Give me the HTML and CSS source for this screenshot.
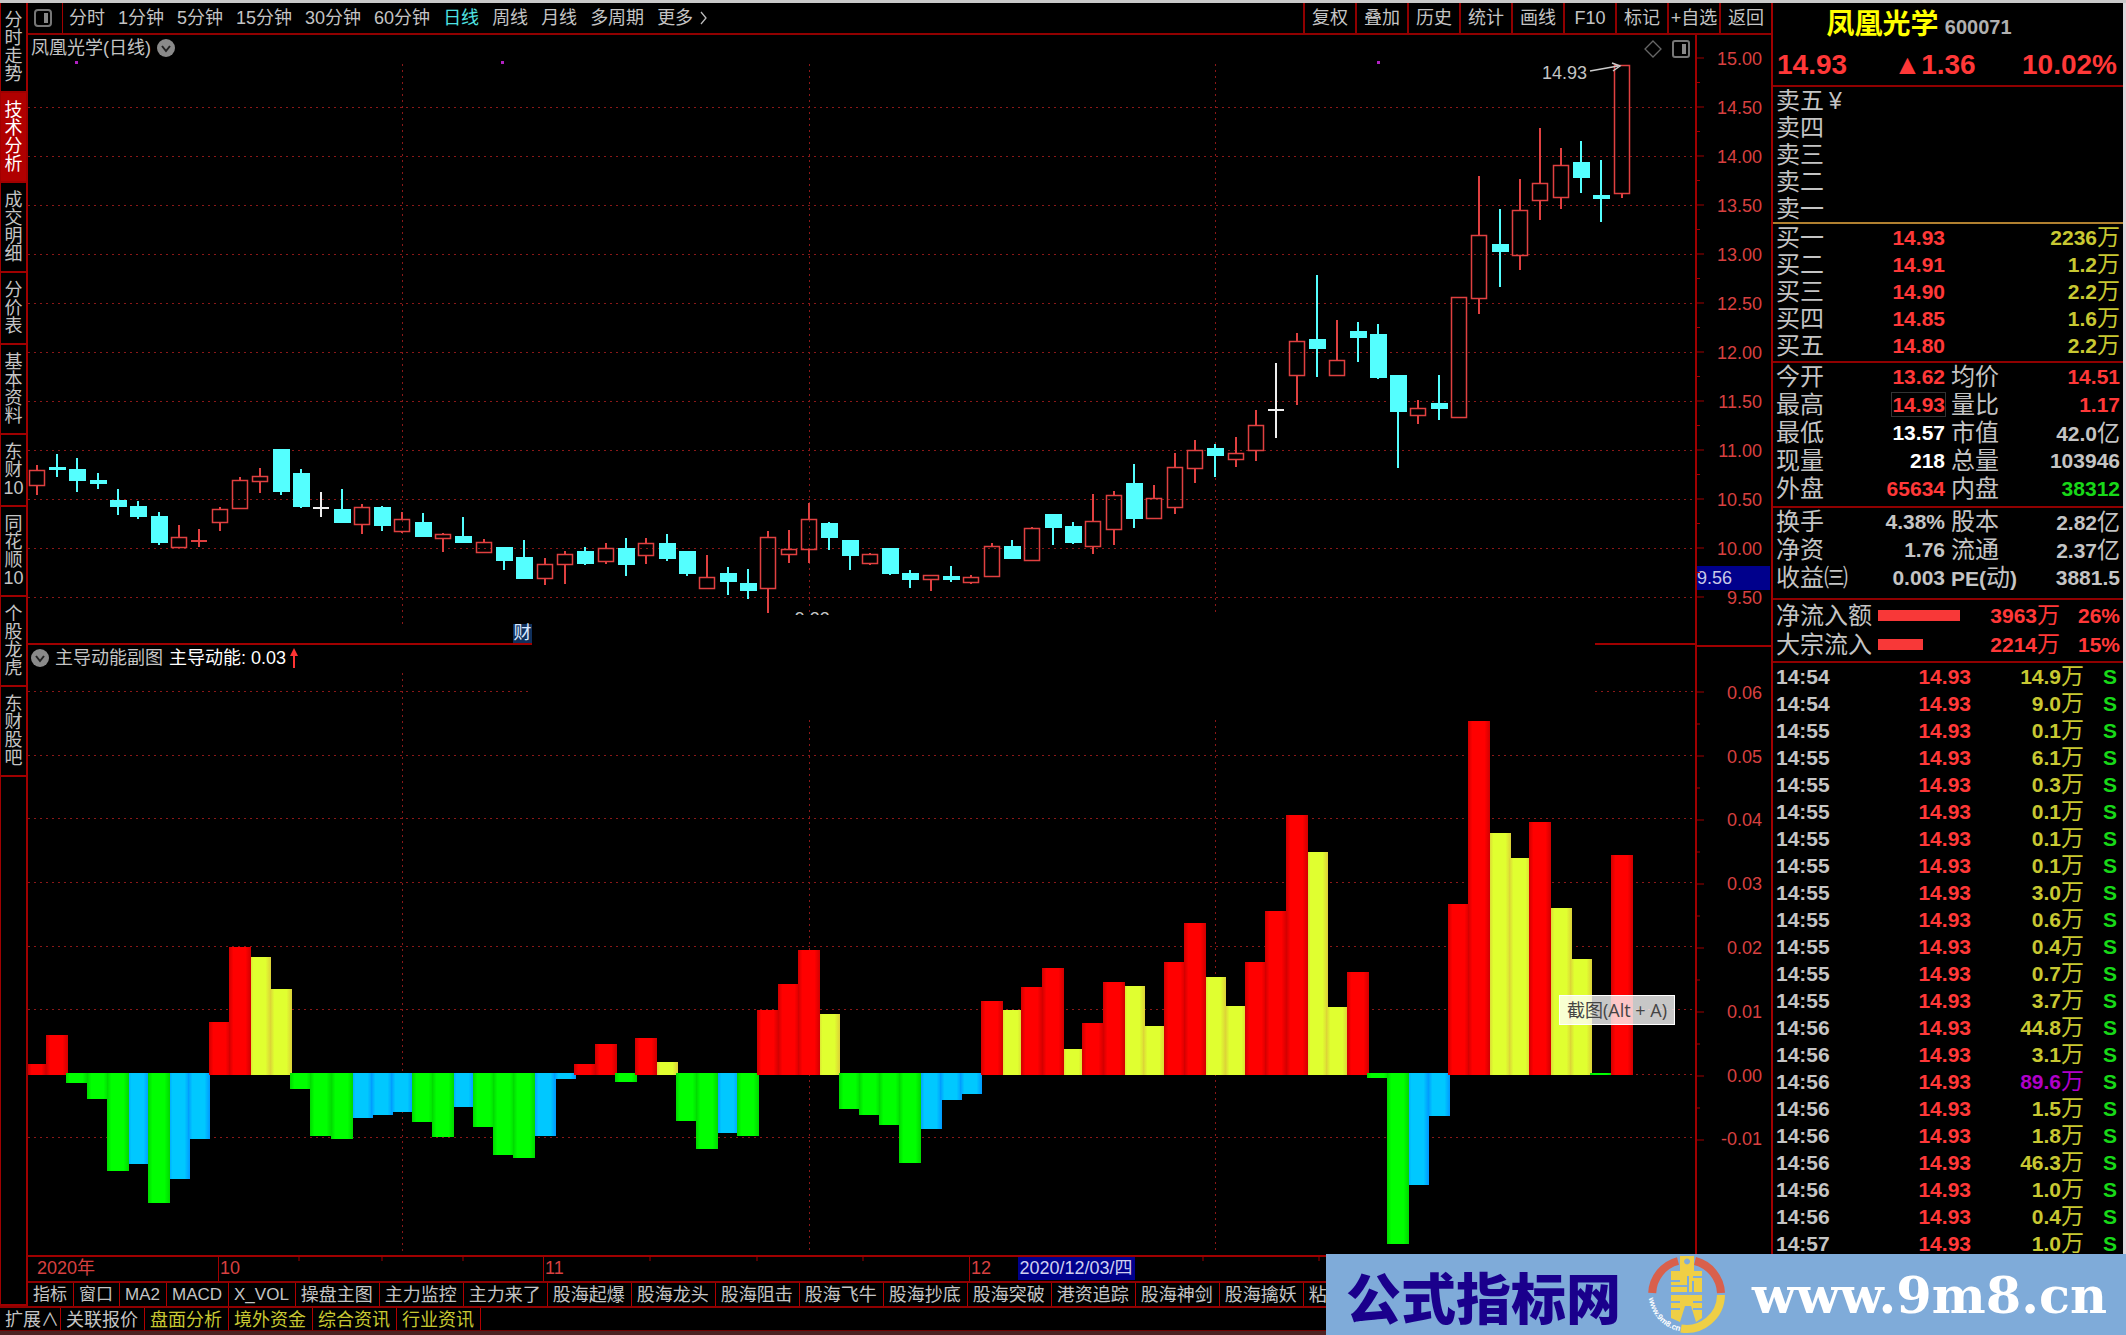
FILE: index.html
```html
<!DOCTYPE html>
<html lang="zh-CN">
<head>
<meta charset="utf-8">
<title>凤凰光学 600071</title>
<link rel="stylesheet" href="styles.css">
</head>
<body>
<div class="edge-strip"></div>
<div class="app">
  <div class="left">
    <div class="workspace">
      <nav class="side-tabs">
        <button class="four">分时走势</button>
        <button class="four active">技术分析</button>
        <button class="four">成交明细</button>
        <button class="three">分价表</button>
        <button class="four">基本资料</button>
        <button class="three">东财<span>10</span></button>
        <button class="four">同花顺<span>10</span></button>
        <button class="four">个股龙虎</button>
        <button class="four">东财股吧</button>
      </nav>
      <main class="main">
        <header class="toolbar">
          <button class="layout-btn" aria-label="布局"><svg width="18" height="18" viewBox="0 0 18 18"><rect x="1" y="1" width="16" height="16" rx="3" fill="none" stroke="#777" stroke-width="2"/><rect x="10" y="4" width="4" height="10" fill="#888"/></svg></button>
          <div class="periods">
            <button>分时</button><button>1分钟</button><button>5分钟</button><button>15分钟</button><button>30分钟</button><button>60分钟</button><button class="on">日线</button><button>周线</button><button>月线</button><button>多周期</button><button>更多<svg width="9" height="14" viewBox="0 0 9 14"><path d="M2 1l5 6-5 6" fill="none" stroke="#bbb" stroke-width="1.3"/></svg></button>
          </div>
          <div class="actions">
            <button>复权</button><button>叠加</button><button>历史</button><button>统计</button><button>画线</button><button>F10</button><button>标记</button><button>+自选</button><button>返回</button>
          </div>
        </header>

        <section class="pane price-pane">
          <div class="plot">
            <svg class="chart" id="price" viewBox="28 35 1667 610" preserveAspectRatio="none"></svg>
            <div class="pane-title">凤凰光学(日线) <svg width="18" height="18" viewBox="0 0 18 18"><circle cx="9" cy="9" r="9" fill="#8a8a8a"/><path d="M5 7l4 5 4-5" fill="none" stroke="#222" stroke-width="2"/></svg></div>
            <div class="pane-icons">
              <svg width="18" height="18" viewBox="0 0 18 18"><path d="M9 1l8 8-8 8-8-8z" fill="none" stroke="#666" stroke-width="1.3"/></svg>
              <svg width="18" height="18" viewBox="0 0 18 18"><rect x="1" y="1" width="16" height="16" rx="2" fill="none" stroke="#777" stroke-width="2"/><rect x="10" y="4" width="4" height="10" fill="#888"/></svg>
            </div>
            <span class="high-mark">14.93</span>
            <span class="low-mark">9.33</span>
            <span class="event-mark">财</span>
          </div>
          <div class="axis price-axis">
            <span>15.00</span><span>14.50</span><span>14.00</span><span>13.50</span><span>13.00</span><span>12.50</span><span>12.00</span><span>11.50</span><span>11.00</span><span>10.50</span><span>10.00</span><span>9.50</span>
            <b class="cursor-price">9.56</b>
          </div>
        </section>

        <section class="pane sub-pane">
          <div class="plot">
            <svg class="chart" id="energy" viewBox="28 645 1667 610" preserveAspectRatio="none"></svg>
            <div class="pane-title"><svg width="18" height="18" viewBox="0 0 18 18"><circle cx="9" cy="9" r="9" fill="#8a8a8a"/><path d="M5 7l4 5 4-5" fill="none" stroke="#222" stroke-width="2"/></svg><span>主导动能副图</span><span class="value">主导动能: 0.03<svg width="8" height="20" viewBox="0 0 8 20"><path d="M4 0l4 8H5v12H3V8H0z" fill="#f33"/></svg></span></div>
            <div class="tip">截图(Alt + A)</div>
          </div>
          <div class="axis sub-axis">
            <span>0.06</span><span>0.05</span><span>0.04</span><span>0.03</span><span>0.02</span><span>0.01</span><span>0.00</span><span>-0.01</span>
          </div>
        </section>

        <div class="dates">
          <span class="d-year">2020年</span><span>10</span><span>11</span><span>12</span>
          <b class="cursor-date">2020/12/03/四</b>
        </div>

        <div class="tabs indicators">
          <button class="narrow">指标</button><button class="narrow">窗口</button><button class="narrow">MA2</button><button class="narrow">MACD</button><button class="narrow">X_VOL</button><button>操盘主图</button><button>主力监控</button><button>主力来了</button><button>股海起爆</button><button>股海龙头</button><button>股海阻击</button><button>股海飞牛</button><button>股海抄底</button><button>股海突破</button><button>港资追踪</button><button>股海神剑</button><button>股海擒妖</button><button>粘</button>
        </div>
      </main>
    </div>
    <div class="tabs links">
      <button class="expand">扩展∧</button><button>关联报价</button><button class="gold">盘面分析</button><button class="gold">境外资金</button><button class="gold">综合资讯</button><button class="gold">行业资讯</button>
    </div>
  </div>

  <aside class="quote">
    <header class="quote-head">
      <h1>凤凰光学 <small>600071</small></h1>
      <div class="last"><span>14.93</span><span>▲1.36</span><span>10.02%</span></div>
    </header>
    <table class="book asks">
      <tr><th>卖五<i>¥</i></th><td></td><td></td></tr>
      <tr><th>卖四</th><td></td><td></td></tr>
      <tr><th>卖三</th><td></td><td></td></tr>
      <tr><th>卖二</th><td></td><td></td></tr>
      <tr><th>卖一</th><td></td><td></td></tr>
    </table>
    <table class="book bids">
      <tr><th>买一</th><td class="up">14.93</td><td class="vol">2236<i>万</i></td></tr>
      <tr><th>买二</th><td class="up">14.91</td><td class="vol">1.2<i>万</i></td></tr>
      <tr><th>买三</th><td class="up">14.90</td><td class="vol">2.2<i>万</i></td></tr>
      <tr><th>买四</th><td class="up">14.85</td><td class="vol">1.6<i>万</i></td></tr>
      <tr><th>买五</th><td class="up">14.80</td><td class="vol">2.2<i>万</i></td></tr>
    </table>
    <table class="stats">
      <tr><th>今开</th><td class="up">13.62</td><th>均价</th><td class="up">14.51</td></tr>
      <tr><th>最高</th><td class="up"><span class="boxed">14.93</span></td><th>量比</th><td class="up">1.17</td></tr>
      <tr><th>最低</th><td class="white">13.57</td><th>市值</th><td>42.0<i>亿</i></td></tr>
      <tr><th>现量</th><td class="white">218</td><th>总量</th><td>103946</td></tr>
      <tr><th>外盘</th><td class="up">65634</td><th>内盘</th><td class="down">38312</td></tr>
    </table>
    <table class="stats extra">
      <tr><th>换手</th><td>4.38%</td><th>股本</th><td>2.82<i>亿</i></td></tr>
      <tr><th>净资</th><td>1.76</td><th>流通</th><td>2.37<i>亿</i></td></tr>
      <tr><th>收益㈢</th><td>0.003</td><th class="pe"><b>PE(</b>动<b>)</b></th><td>3881.5</td></tr>
    </table>
    <table class="flow">
      <tr><th>净流入额</th><td class="meter"><div style="width:82px"></div></td><td class="up">3963<i>万</i></td><td class="up">26%</td></tr>
      <tr><th>大宗流入</th><td class="meter"><div style="width:45px"></div></td><td class="up">2214<i>万</i></td><td class="up">15%</td></tr>
    </table>
    <div class="ticks-box"><table class="ticks" id="ticks"></table></div>
  </aside>
</div>

<a class="banner" href="#">
  <strong>公式指标网</strong>
  <svg width="90" height="81" viewBox="0 0 90 81">
    <path d="M12.200 39A34.500 34.500 0 0 1 38 7" fill="none" stroke="#d9604c" stroke-width="8"/>
    <path d="M55 7A34.500 34.500 0 0 1 81 39" fill="none" stroke="#d9604c" stroke-width="8"/>
    <path d="M81 41A34.500 34.500 0 0 1 41 74.500" fill="none" stroke="#efcf45" stroke-width="8"/>
    <path fill-rule="evenodd" fill="#efcf45" d="M40 2H54V17H40zM47 4.500a3 3 0 1 0 .1 0z"/>
    <path fill="#efcf45" d="M31 17H62V38H31zM31 41H62V64L56 68 51 52H45L40 68 31 64z"/>
    <path d="M31 27H40M31 32H48M48 22V38M53 27V38M53 23H62M31 48H40M53 48H62M31 55H40M53 55H62" stroke="#7fabd9" stroke-width="2"/>
    <path id="arc" d="M9 44A38 38 0 0 0 39 77" fill="none"/>
    <text class="arc-text"><textPath href="#arc">www.9m8.cn</textPath></text>
  </svg>
  <em>www.9m8.cn</em>
</a>
<script src="chart.js"></script>
</body>
</html>
```
FILE: styles.css
```css
* { box-sizing: border-box; }
html, body { margin: 0; height: 100%; }
body {
  display: flex;
  flex-direction: column;
  min-height: 100vh;
  overflow: hidden;
  background: #000;
  color: #c4c4c4;
  font: 18px/24px "Liberation Sans", "Noto Sans CJK SC", sans-serif;
}
button {
  margin: 0;
  padding: 0;
  border: 0;
  background: none;
  color: inherit;
  font: inherit;
  white-space: nowrap;
}
i { font-style: normal; }
svg { display: block; }

.edge-strip { flex: none; height: 3px; background: #c9c9c9; }
.app { flex: 1; display: flex; min-height: 0; border-right: 3px solid #dcd8dc; border-bottom: 4px solid #4c2222; }
.left { flex: 1; min-width: 0; display: flex; flex-direction: column; }
.workspace { flex: 1; min-height: 0; display: flex; }

/* vertical tabs */
.side-tabs { flex: none; width: 28px; display: flex; flex-direction: column; border: solid #a00000; border-width: 0 2px 2px 1px; }
.side-tabs button {
  height: 90px;
  padding: 0 3px;
  border-bottom: 2px solid #a00000;
  font-size: 18px;
  line-height: 18px;
  white-space: normal;
}
.side-tabs button.three { height: 72px; }
.side-tabs button span { display: block; margin: 0 -1px; }
.side-tabs .active { background: #b00000; color: #fff; }

.main { flex: 1; min-width: 0; display: flex; flex-direction: column; }

/* toolbar */
.toolbar { flex: none; height: 32px; display: flex; border-bottom: 2px solid #900000; }
.layout-btn { width: 35px; padding-left: 6px; border-right: 1px solid #a00000; }
.periods { display: flex; gap: 13px; padding-left: 6px; }
.periods button { display: flex; align-items: center; gap: 6px; }
.periods .on { color: #4fe3e3; }
.actions { margin-left: auto; display: flex; }
.actions button { width: 52px; border-left: 2px solid #900000; }

/* chart panes */
.pane { flex: 1; min-height: 0; display: flex; }
.plot { position: relative; flex: 1; min-width: 0; }
.chart { position: absolute; inset: 0; width: 100%; height: 100%; }
.pane-title { position: relative; display: flex; align-items: center; gap: 6px; padding-left: 3px; height: 26px; }
.pane-title .value { color: #fff; display: flex; gap: 4px; align-items: center; }
.pane-icons { position: absolute; top: 5px; right: 5px; display: flex; gap: 10px; }
.axis { position: relative; flex: none; width: 76px; display: flex; flex-direction: column; border-left: 2px solid #a00000; color: #d84040; text-align: right; }
.axis span { display: flex; align-items: center; justify-content: flex-end; padding-right: 9px; }
.price-axis span { flex: 49 49 0; min-height: 0; }
.price-axis::after { content: ""; flex: 23 23 0; }
.sub-axis span { flex: 64 64 0; min-height: 0; }
.sub-axis::before { content: ""; flex: 14 14 0; }
.sub-axis::after { content: ""; flex: 84 84 0; }
.sub-axis { border-top: 2px solid #a00000; }
.cursor-price { position: absolute; left: 0; right: 1px; top: 87%; height: 24px; background: #00008c; color: #c8c8e8; font-weight: 400; text-align: left; }
.high-mark { position: absolute; right: 108px; top: 26px; }
.low-mark { position: absolute; left: 46%; top: 577px; height: 3px; overflow: hidden; line-height: 14px; }
.event-mark { position: absolute; left: 29%; bottom: 2px; width: 19px; margin-left: 2px; line-height: 19px; background: #10305c; color: #d8e8ff; }
.tip { position: absolute; right: 20px; top: 57%; margin-top: 2px; padding: 2px 7px; border: 1px solid #fff; background: rgba(255, 255, 255, .78); color: #444; font: 18px/24px "Open Sans", "Noto Sans CJK SC", sans-serif; }

/* date scale */
.dates { position: relative; flex: none; height: 26px; display: grid; grid-template-columns: 191fr 325fr 426fr 801fr; border-top: 2px solid #a00000; color: #d84040; line-height: 23px; }
.dates span { padding-left: 1px; border-right: 1px solid #a00000; }
.dates .d-year { padding-left: 9px; }
.cursor-date { position: absolute; left: 57%; margin-left: -4px; padding: 0 2px; background: #00008c; color: #d0d0f0; font-weight: 400; }

/* bottom tabs */
.tabs { flex: none; display: flex; overflow: hidden; height: 25px; border-top: 2px solid #900000; }
.tabs button { flex: none; padding: 0 6px 0 5px; border-right: 1px solid #b00000; }
.tabs .narrow { font-size: 17px; }
.tabs .expand { width: 61px; }
.links { border-bottom: 1px solid #700000; }
.links .gold { color: #c8c832; }

/* quote panel */
.quote { flex: none; width: 352px; display: flex; flex-direction: column; border-left: 2px solid #a00000; }
.quote-head { flex: none; height: 84px; border-bottom: 2px solid #900000; }
.quote h1 { margin: 0; padding: 0 58px 0 0; height: 41px; text-align: center; color: #ff0; font: bold 28px/38px "Noto Sans CJK SC", sans-serif; }
.quote h1 small { color: #b0b0b0; font: bold 20px "Liberation Sans", sans-serif; }
.last { display: flex; justify-content: space-between; padding: 0 6px 0 4px; color: #ff3838; font: bold 28px/42px "Liberation Sans", "DejaVu Sans", sans-serif; }
table { flex: none; width: 100%; border-collapse: collapse; table-layout: fixed; }
th { padding: 0; text-align: left; font-weight: 400; font-size: 24px; white-space: nowrap; }
td { padding: 0; text-align: right; font-weight: 700; font-size: 21px; white-space: nowrap; }
td i, th i { font-weight: 400; font-size: 23px; }
th i { margin-left: 5px; }
.up { color: #ff3838; }
.down { color: #18d818; }
.white { color: #fff; }
.vol { color: #c8c832; }
.big { color: #b000c8; }

.book, .stats, .flow { display: block; border-bottom: 2px solid #900000; }
.book tbody, .stats tbody, .flow tbody { display: block; }
.book tr { display: grid; grid-template-columns: 80px 89px 1fr; height: 27px; line-height: 27px; }
.book { padding: 0 3px; }
.asks { border-bottom-color: #b08030; }
.bids { padding-bottom: 2px; }
.stats tr { display: grid; grid-template-columns: 80px 89px 80px 1fr; height: 28px; line-height: 28px; }
.stats { padding: 0 3px 3px; }
.stats.extra { padding-bottom: 6px; }
.stats th:nth-child(3) { padding-left: 6px; }
.pe b { font-size: 21px; }
.boxed { outline: 1px solid #333; }
.flow tr { display: grid; grid-template-columns: 102px 90px 92px 1fr; height: 29px; line-height: 29px; }
.flow { padding: 1px 3px 2px; }
.meter { display: flex; align-items: center; }
.meter div { height: 11px; background: #f83838; }
.ticks-box { flex: 1; min-height: 0; overflow: hidden; padding: 0 3px; }
.ticks td { height: 27px; line-height: 27px; width: 113px; }
.ticks td:first-child { width: 82px; text-align: left; }
.ticks td:last-child { padding-right: 3px; width: 36px; color: #18d818; }

/* site banner */
.banner { position: fixed; right: 0; bottom: 0; width: 800px; height: 81px; display: flex; align-items: center; padding-left: 20px; background: #7fabd9; text-decoration: none; }
.banner strong { color: #1a008c; font: 900 55px/72px "Noto Sans CJK SC", sans-serif; }
.banner svg { margin: 0 22px 0 19px; }
.banner em { color: #fff; font: normal bold 51px/72px "DejaVu Serif", serif; }
.arc-text { fill: #fff; font: bold 8px "Liberation Sans", sans-serif; }
```
FILE: chart.js
```js
const STEP = 20.32, FIRST = 36.7;
const cx = i => Math.round(FIRST + i * STEP);

// kind, high, body top, body bottom, low
const candles = `r465,470,485,495 c454,467,469,477 c458,469,480,492 c473,480,483,489 c489,500,506,515 c501,506,516,519 c512,516,542,545 r525,537,547,547 r529,541,541,547 r507,509,522,531
r477,480,508,508 r468,476,481,493 c449,449,491,495 c469,473,506,508 w492,508,508,517 c489,509,522,522 r504,507,524,534 c506,507,525,531 r512,519,531,533 c513,522,536,537
r533,534,538,552 c517,536,542,543 r539,542,552,552 c547,547,560,570 c540,557,578,579 r558,564,578,585 r551,554,564,584 c547,551,563,565 r543,548,561,564 c538,548,564,576
r538,543,555,564 c534,543,558,561 c551,551,573,576 r555,577,588,588 c567,573,581,595 c569,583,590,599 r531,537,588,613 r530,549,554,563 r503,519,549,563 c522,523,537,550
c540,540,555,570 r553,554,563,565 c548,548,573,575 c570,573,579,588 r575,575,579,591 c566,576,579,582 r575,577,582,584 r543,546,576,576 c540,546,558,558 r527,528,560,560
c514,514,527,545 c522,526,542,544 r494,521,546,554 r491,495,529,545 c464,483,518,528 r485,498,518,519 r453,467,507,514 r440,450,468,483 c444,448,455,477 r437,453,459,467
r410,425,450,461 w363,410,410,438 r333,341,375,405 c275,339,348,377 r320,360,375,375 c322,331,337,362 c324,334,377,379 c375,375,411,468 r400,408,415,424 c375,403,408,420
r297,297,417,417 r176,235,298,314 c209,244,251,287 r179,210,255,270 r128,183,200,220 r148,165,197,209 c141,162,177,193 c160,195,198,222 r65,65,193,198`.split(/\s+/);

const bars = `r1064 r1035 g1083 g1099 g1171 b1164 g1203 b1179 b1139 r1022 r947 y957 y989 g1089 g1136 g1139 b1118 b1115 b1112 g1122 g1137 b1107 g1127 g1155 g1158 b1136 b1079 r1064 r1044 g1082
r1038 y1062 g1121 g1149 b1133 g1136 r1010 r984 r950 y1014 g1109 g1115 g1125 g1163 b1129 b1100 b1094 r1001 y1010 r987 r968 y1049 r1023 r982 y986 y1026 r962 r923 y977 y1006
r962 r911 r815 y852 y1007 r972 g1078 g1244 b1185 b1116 r904 r721 y833 y858 r822 y908 y959 g1075 r855`.split(/\s+/);

const line = (x1, y1, x2, y2, color, extra = '') =>
  `<path d="M${x1} ${y1}L${x2} ${y2}" stroke="${color}" ${extra} fill="none"/>`;
const dotted = 'stroke-dasharray="2 4"';
const grid = '#8a1818';
const axis = '#a00000';

let s = '';
for (let i = 1; i < 12; i++) s += line(28, Math.round(58 + 49 * i) + .5, 1694, Math.round(58 + 49 * i) + .5, grid, dotted);
for (const x of [402.5, 809.5, 1215.5]) s += line(x, 64, x, x < 500 ? 624 : 613, grid, dotted);
candles.forEach((c, i) => {
  const [hi, top, bot, lo] = c.slice(1).split(',').map(Number);
  const x = cx(i), kind = c[0];
  const color = { r: '#e04040', c: '#54ffff', w: '#eee' }[kind];
  const wick = 'stroke-width="2"';
  s += line(x, hi, x, top, color, wick) + line(x, bot, x, lo, color, wick);
  if (top === bot) s += line(x - 8, top, x + 8, top, color, wick);
  else if (kind === 'r') s += `<rect x="${x - 7.5}" y="${top + .5}" width="15" height="${bot - top}" fill="none" stroke="${color}" stroke-width="1.500"/>`;
  else s += `<rect x="${x - 8}" y="${top}" width="17" height="${bot - top + 1}" fill="${color}"/>`;
});
for (const x of [76, 502, 1378]) s += `<rect x="${x - 1}" y="61" width="3" height="3" fill="#b020c0"/>`;
s += line(1590, 71, 1618, 66, '#ccc', 'stroke-width="1.500"') + '<path d="M1612 63l8 3-7 5" fill="none" stroke="#ccc" stroke-width="1.500"/>';
s += line(28, 644, 532, 644, axis, 'stroke-width="2"') + line(1595, 644, 1696, 644, axis, 'stroke-width="2"');
document.getElementById('price').innerHTML = s;

s = '<defs>';
const tones = { r: ['#ff0000', '#d00000'], g: ['#00ff00', '#00d800'], b: ['#00c8ff', '#0098ff'], y: ['#e0ff30', '#dcd038'] };
for (const k in tones) s += `<linearGradient id="t${k}"><stop offset="0" stop-color="${tones[k][1]}"/><stop offset=".2" stop-color="${tones[k][0]}"/><stop offset=".75" stop-color="${tones[k][0]}"/><stop offset="1" stop-color="${tones[k][1]}"/></linearGradient>`;
s += '</defs>' + line(28, 691.5, 530, 691.5, grid, dotted) + line(1595, 691.5, 1694, 691.5, grid, dotted);
for (const y of [755.5, 818.5, 882.5, 946.5, 1009.5, 1074.5, 1137.5]) s += line(28, y, 1694, y, grid, dotted);
for (const x of [402.5, 809.5, 1215.5]) s += line(x, x < 500 ? 673 : 720, x, 1253, grid, dotted);
for (const layer of ['yb', 'rg']) bars.forEach((b, i) => {
  if (!layer.includes(b[0])) return;
  const y = Number(b.slice(1)), up = 'ry'.includes(b[0]);
  s += `<rect x="${Math.max(28, cx(i) - 11)}" y="${up ? y : 1073}" width="${i ? 22 : 18}" height="${up ? 1075 - y : y - 1073}" fill="url(#t${b[0]})"/>`;
});
document.getElementById('energy').innerHTML = s;

// scale marks on the right-hand axes and the date row
const marks = (parent, viewBox, paths) => {
  document.querySelector(parent).insertAdjacentHTML('beforeend',
    `<svg class="chart" viewBox="${viewBox}" preserveAspectRatio="none">${paths}</svg>`);
};
let p = '';
for (let i = 0; i < 23; i++) p += line(0, 23 + i * 24.5, i % 2 ? 3 : 7, 23 + i * 24.5, axis);
marks('.price-axis', '0 0 74 610', p);
p = '';
for (let i = 0; i < 15; i++) p += line(0, 45 + i * 32, i % 2 ? 3 : 7, 45 + i * 32, axis);
marks('.sub-axis', '0 0 74 608', p);
p = '';
for (const x of [299, 382, 463, 650, 757, 863, 1203, 1319]) p += line(x, 0, x, 4, axis);
marks('.dates', '28 0 1743 24', p);

const ticks = '14:54 14.9,14:54 9.0,14:55 0.1,14:55 6.1,14:55 0.3,14:55 0.1,14:55 0.1,14:55 0.1,14:55 3.0,14:55 0.6,14:55 0.4,14:55 0.7,14:55 3.7,14:56 44.8,14:56 3.1,14:56 89.6,14:56 1.5,14:56 1.8,14:56 46.3,14:56 1.0,14:56 0.4,14:57 1.0';
document.getElementById('ticks').innerHTML = ticks.split(',').map(t => {
  const [time, vol] = t.split(' ');
  return `<tr><td>${time}</td><td class="up">14.93</td><td class="${vol > 50 ? 'big' : 'vol'}">${vol}<i>万</i></td><td>S</td></tr>`;
}).join('');
```
